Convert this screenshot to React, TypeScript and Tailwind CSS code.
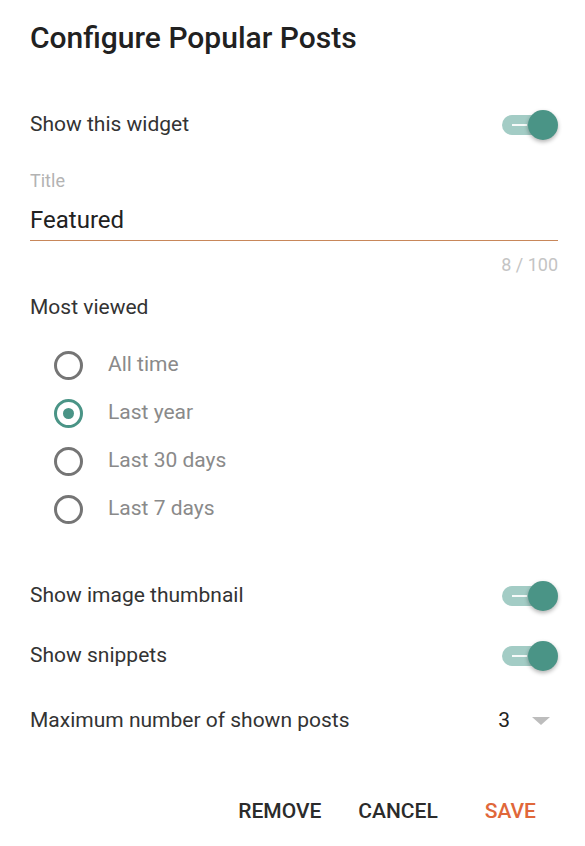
import React, { useState } from 'react';

const Toggle = ({ on }: { on: boolean }) => (
  <div className="relative w-[56px] h-[30px] flex items-center">
    <div className="w-[50px] h-[20px] rounded-full bg-[#a3ccc5] flex items-center pl-[10px]">
      <div className="w-[15px] h-[2px] bg-white/90" />
    </div>
    {on && (
      <div className="absolute right-0 top-0 w-[30px] h-[30px] rounded-full bg-[#4a9486] shadow-[0_2px_4px_rgba(0,0,0,0.3)]" />
    )}
  </div>
);

const Radio = ({ checked }: { checked: boolean }) =>
  checked ? (
    <div className="w-[29px] h-[29px] rounded-full border-[3px] border-[#4a9486] flex items-center justify-center">
      <div className="w-[11px] h-[11px] rounded-full bg-[#4a9486]" />
    </div>
  ) : (
    <div className="w-[29px] h-[29px] rounded-full border-[3px] border-[#757575]" />
  );

const App = () => {
  const [period] = useState('Last year');
  const periods = ['All time', 'Last year', 'Last 30 days', 'Last 7 days'];

  return (
    <div className="w-[585px] h-[846px] bg-white font-['Roboto',sans-serif] text-[#333333] pl-[30px] pr-[27px] pt-[20px]">
      <h1 className="text-[30px] leading-[36px] font-medium text-[#212121]">Configure Popular Posts</h1>

      {/* Visibility */}
      <div className="mt-[49px] h-[40px] flex items-center justify-between">
        <span className="text-[21px]">Show this widget</span>
        <Toggle on />
      </div>

      {/* Title field */}
      <div className="mt-[25px] text-[18px] leading-[22px] text-[#b3b3b3]">Title</div>
      <div className="mt-[13px] border-b border-[#c8875a] pb-[5px]">
        <div className="text-[24px] leading-[30px] text-[#212121]">Featured</div>
      </div>
      <div className="mt-[13px] text-right text-[18px] leading-[22px] text-[#c4c4c4]">8 / 100</div>

      {/* Period */}
      <div className="mt-[18px] text-[21px] leading-[26px]">Most viewed</div>
      <div className="mt-[21px] pl-[24px] flex flex-col">
        {periods.map((p) => (
          <div key={p} className="h-[48px] flex items-center gap-[25px]">
            <Radio checked={p === period} />
            <span className="text-[21px] text-[#8a8a8a]">{p}</span>
          </div>
        ))}
      </div>

      <div className="mt-[43px] h-[40px] flex items-center justify-between">
        <span className="text-[21px]">Show image thumbnail</span>
        <Toggle on />
      </div>
      <div className="mt-[20px] h-[40px] flex items-center justify-between">
        <span className="text-[21px]">Show snippets</span>
        <Toggle on />
      </div>
      <div className="mt-[25px] h-[40px] flex items-center justify-between">
        <span className="text-[21px]">Maximum number of shown posts</span>
        <div className="flex items-center gap-[22px] pr-[8px]">
          <span className="text-[21px] text-[#212121]">3</span>
          <div className="w-0 h-0 border-l-[9px] border-r-[9px] border-t-[8px] border-l-transparent border-r-transparent border-t-[#bdbdbd]" />
        </div>
      </div>

      {/* Actions */}
      <div className="mt-[54px] flex justify-end items-center gap-[37px] pr-[22px]">
        <button className="text-[21px] leading-[32px] font-medium text-[#2b2b2b] uppercase">Remove</button>
        <button className="text-[21px] leading-[32px] font-medium text-[#2b2b2b] uppercase">Cancel</button>
        <button className="ml-[10px] text-[21px] leading-[32px] font-medium text-[#e0673a] uppercase">Save</button>
      </div>
    </div>
  );
};

export default App;
